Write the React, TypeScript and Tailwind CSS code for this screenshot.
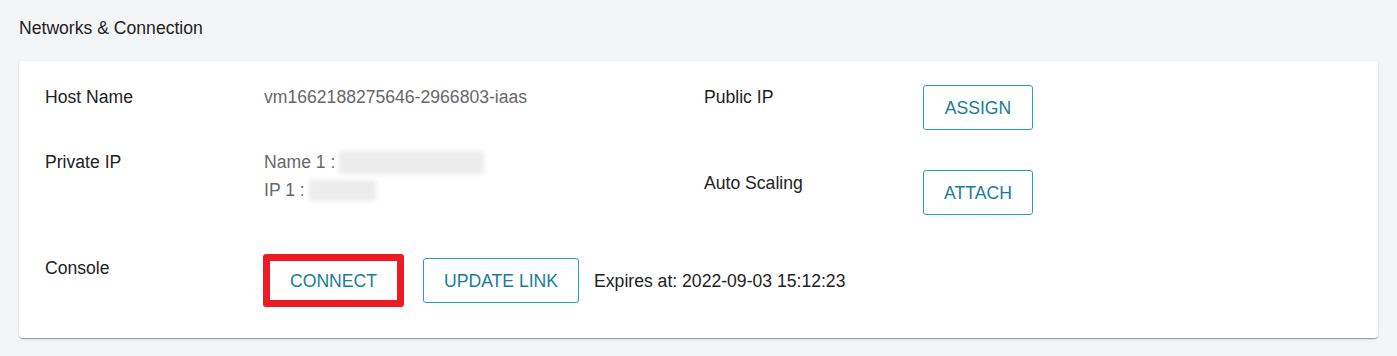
import React from 'react';

const font = { fontFamily: '"Liberation Sans", Arial, sans-serif' };

const OutlineButton: React.FC<{ label: string; className?: string }> = ({ label, className = '' }) => (
  <button
    className={`h-[45px] shrink-0 whitespace-nowrap flex items-center justify-center rounded-[3px] border border-[#2a9fb8] bg-white px-[20px] text-[17.6px] text-[#1a7d98] ${className}`}
  >
    {label}
  </button>
);

export default function App() {
  return (
    <div className="min-h-[356px] w-full bg-[#f4f5f7] px-[19px] pt-[14px] pb-[18px] leading-[28px] text-[17.6px]" style={font}>
      <h2 className="mb-[19px] text-[17.6px] font-normal text-[#222]">Networks &amp; Connection</h2>

      <div className="flex rounded-[4px] bg-white pt-[22px] pb-[31px] pl-[26px] shadow-[0_2px_1px_-1px_rgba(0,0,0,0.2),0_1px_1px_0_rgba(0,0,0,0.14),0_1px_3px_0_rgba(0,0,0,0.12)]">
        {/* left column */}
        <div className="flex w-[659px] shrink-0 flex-col">
          <div className="flex">
            <div className="w-[219px] shrink-0 text-[#222]">Host Name</div>
            <div className="text-[#686868]">vm1662188275646-2966803-iaas</div>
          </div>

          <div className="mt-[37px] flex">
            <div className="w-[219px] shrink-0 text-[#222]">Private IP</div>
            <div className="flex flex-col text-[#686868]">
              <div className="flex items-center">
                Name 1 :<span className="ml-[4px] inline-block h-[23px] w-[145px] bg-[#ececec] blur-[2px]" />
              </div>
              <div className="flex items-center">
                IP 1 :<span className="ml-[4px] mt-[1px] inline-block h-[21px] w-[67px] bg-[#ececec] blur-[2px]" />
              </div>
            </div>
          </div>

          <div className="mt-[50px] flex items-start whitespace-nowrap">
            <div className="w-[218px] shrink-0 text-[#222]">Console</div>
            <div className="flex shrink-0 items-center">
              <div className="shrink-0 rounded-[3px] border-[7px] border-[#ed1c24]">
                <button className="flex h-[39px] items-center bg-white px-[20px] text-[17.6px] text-[#1a7d98]">
                  CONNECT
                </button>
              </div>
              <OutlineButton label="UPDATE LINK" className="ml-[19px]" />
              <span className="ml-[15px] shrink-0 text-[#222]">Expires at: 2022-09-03 15:12:23</span>
            </div>
          </div>
        </div>

        {/* right column */}
        <div className="flex flex-col">
          <div className="flex items-start">
            <div className="w-[219px] shrink-0 text-[#222]">Public IP</div>
            <OutlineButton label="ASSIGN" className="mt-[2px] w-[110px]" />
          </div>
          <div className="mt-[39px] flex items-start">
            <div className="w-[219px] shrink-0 text-[#222]">Auto Scaling</div>
            <OutlineButton label="ATTACH" className="mt-[1px] w-[110px]" />
          </div>
        </div>
      </div>
    </div>
  );
}
